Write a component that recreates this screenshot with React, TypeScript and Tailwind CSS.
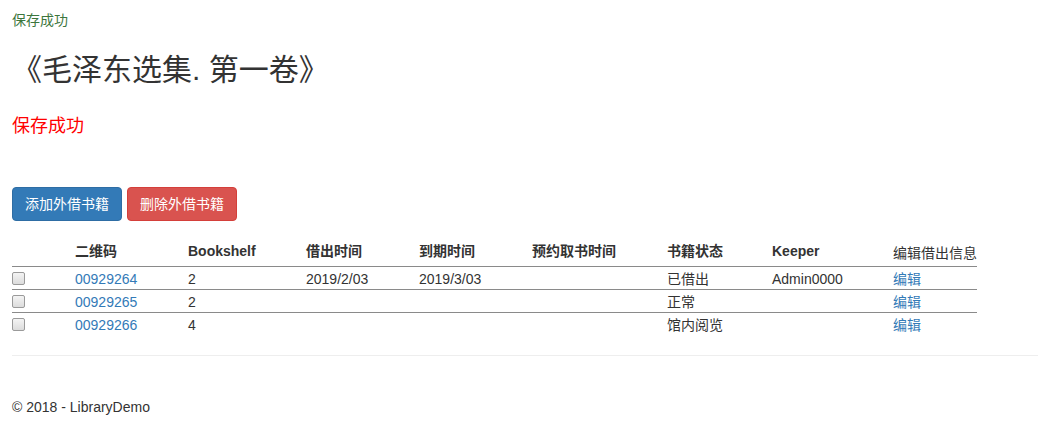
import React from "react";

const font = { fontFamily: '"Liberation Sans", "Noto Sans CJK SC", sans-serif' };

type Row = { code: string; shelf: string; out: string; due: string; reserve: string; status: string; keeper: string };

const rows: Row[] = [
  { code: "00929264", shelf: "2", out: "2019/2/03", due: "2019/3/03", reserve: "", status: "已借出", keeper: "Admin0000" },
  { code: "00929265", shelf: "2", out: "", due: "", reserve: "", status: "正常", keeper: "" },
  { code: "00929266", shelf: "4", out: "", due: "", reserve: "", status: "馆内阅览", keeper: "" },
];

function Box() {
  return (
    <span className="block w-[13px] h-[13px] rounded-[2px] border border-[#9a9a9a] bg-gradient-to-b from-[#f4f4f4] to-[#dcdcdc]" />
  );
}

export default function App() {
  return (
    <div className="bg-white text-[#333] text-[14px] leading-5 pl-3 min-h-[422px]" style={font}>
      <div className="pt-[10px] text-[#3c763d]">保存成功</div>
      <h2 className="mt-[23px] mb-[10px] text-[30px] leading-[33px] font-normal text-[#333]">《毛泽东选集. 第一卷》</h2>
      <div className="mt-[27px] text-[18px] leading-[26px] text-[#f00]">保存成功</div>
      <div className="mt-[48px] flex gap-[5px]">
        <button className="h-[34px] px-3 rounded-[4px] border border-[#2e6da4] bg-[#337ab7] text-white text-[14px] leading-5">
          添加外借书籍
        </button>
        <button className="h-[34px] px-3 rounded-[4px] border border-[#d43f3a] bg-[#d9534f] text-white text-[14px] leading-5">
          删除外借书籍
        </button>
      </div>
      <table className="mt-5 border-collapse w-[965px] table-fixed">
        <colgroup>
          <col className="w-[63px]" />
          <col className="w-[113px]" />
          <col className="w-[118px]" />
          <col className="w-[113px]" />
          <col className="w-[113px]" />
          <col className="w-[135px]" />
          <col className="w-[105px]" />
          <col className="w-[121px]" />
          <col className="w-[84px]" />
        </colgroup>
        <thead>
          <tr className="border-b border-[#8a8a8a] text-left align-bottom">
            <th className="pb-[5px] pt-0"></th>
            <th className="pb-[5px] font-bold">二维码</th>
            <th className="pb-[5px] font-bold">Bookshelf</th>
            <th className="pb-[5px] font-bold">借出时间</th>
            <th className="pb-[5px] font-bold">到期时间</th>
            <th className="pb-[5px] font-bold">预约取书时间</th>
            <th className="pb-[5px] font-bold">书籍状态</th>
            <th className="pb-[5px] font-bold">Keeper</th>
            <th className="pb-[3px] font-normal whitespace-nowrap">编辑借出信息</th>
          </tr>
        </thead>
        <tbody>
          {rows.map((r, i) => (
            <tr key={r.code} className={i > 0 ? "border-t border-[#8a8a8a]" : ""}>
              <td className="pt-[2px] pb-0 align-top">
                <div className="pt-[3px]">
                  <Box />
                </div>
              </td>
              <td className="pt-[2px] pb-0">
                <span className="text-[#337ab7]">{r.code}</span>
              </td>
              <td className="pt-[2px] pb-0">{r.shelf}</td>
              <td className="pt-[2px] pb-0">{r.out}</td>
              <td className="pt-[2px] pb-0">{r.due}</td>
              <td className="pt-[2px] pb-0">{r.reserve}</td>
              <td className="pt-[2px] pb-0">{r.status}</td>
              <td className="pt-[2px] pb-0">{r.keeper}</td>
              <td className="pt-[2px] pb-0">
                <span className="text-[#337ab7]">编辑</span>
              </td>
            </tr>
          ))}
        </tbody>
      </table>
      <hr className="mt-5 border-0 border-t border-[#eee]" />
      <footer className="mt-[41px] pb-[15px]">© 2018 - LibraryDemo</footer>
    </div>
  );
}
